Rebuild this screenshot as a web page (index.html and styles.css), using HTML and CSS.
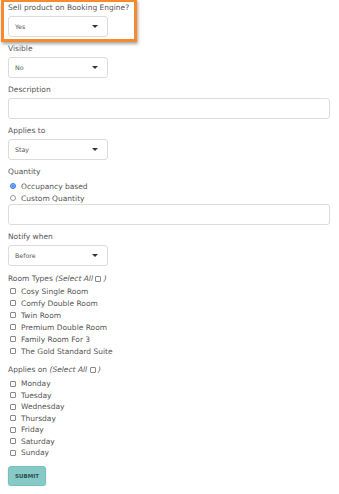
FILE: index.html
```html
<!DOCTYPE html>
<html>
<head>
<meta charset="utf-8">
<link rel="stylesheet" href="styles.css">
</head>
<body>
<form class="form">
  <div class="highlight"></div>
  <div class="field">
    <label class="lbl">Sell product on Booking Engine?</label>
    <div class="select"><span>Yes</span><i class="caret"></i></div>
  </div>
  <div class="field">
    <label class="lbl">Visible</label>
    <div class="select"><span>No</span><i class="caret"></i></div>
  </div>
  <div class="field">
    <label class="lbl">Description</label>
    <div class="input"></div>
  </div>
  <div class="field">
    <label class="lbl">Applies to</label>
    <div class="select"><span>Stay</span><i class="caret"></i></div>
  </div>
  <div class="field">
    <label class="lbl">Quantity</label>
    <div class="opt"><input type="radio" name="q" class="radio" checked><span>Occupancy based</span></div>
    <div class="opt"><input type="radio" name="q" class="radio"><span>Custom Quantity</span></div>
    <div class="input"></div>
  </div>
  <div class="field">
    <label class="lbl">Notify when</label>
    <div class="select"><span>Before</span><i class="caret"></i></div>
  </div>
  <div class="group rooms">
    <div class="lbl">Room Types <em class="all">(Select All <input type="checkbox" class="cb"> )</em></div>
    <div class="opt"><input type="checkbox" class="cb"><span>Cosy Single Room</span></div>
    <div class="opt"><input type="checkbox" class="cb"><span>Comfy Double Room</span></div>
    <div class="opt"><input type="checkbox" class="cb"><span>Twin Room</span></div>
    <div class="opt"><input type="checkbox" class="cb"><span>Premium Double Room</span></div>
    <div class="opt"><input type="checkbox" class="cb"><span>Family Room For 3</span></div>
    <div class="opt"><input type="checkbox" class="cb"><span>The Gold Standard Suite</span></div>
  </div>
  <div class="group days">
    <div class="lbl">Applies on <em class="all">(Select All <input type="checkbox" class="cb"> )</em></div>
    <div class="opt"><input type="checkbox" class="cb"><span>Monday</span></div>
    <div class="opt"><input type="checkbox" class="cb"><span>Tuesday</span></div>
    <div class="opt"><input type="checkbox" class="cb"><span>Wednesday</span></div>
    <div class="opt"><input type="checkbox" class="cb"><span>Thursday</span></div>
    <div class="opt"><input type="checkbox" class="cb"><span>Friday</span></div>
    <div class="opt"><input type="checkbox" class="cb"><span>Saturday</span></div>
    <div class="opt"><input type="checkbox" class="cb"><span>Sunday</span></div>
  </div>
  <button type="button" class="submit">SUBMIT</button>
</form>
</body>
</html>
```
FILE: styles.css
```css
* { box-sizing: border-box; }
html, body { margin: 0; padding: 0; background: #fff; }
body {
  font-family: "DejaVu Sans", "Noto Sans", sans-serif;
  color: #555;
  font-size: 7.5px;
}
.form {
  position: relative;
  padding: 2px 9px 0 8px;
  display: flex;
  flex-direction: column;
}
.highlight {
  position: absolute;
  left: 1px;
  top: -1px;
  width: 136px;
  height: 43px;
  border: 3px solid #f58a2e;
  box-shadow: 1px 2px 3px rgba(0,0,0,0.35);
  pointer-events: none;
}
.field { display: flex; flex-direction: column; margin-bottom: 6px; }
.lbl {
  display: block;
  line-height: 12px;
  height: 12px;
  margin-bottom: 2px;
  color: #555;
}
.select {
  width: 100px;
  height: 21px;
  border: 1px solid #dcdcdc;
  border-radius: 3px;
  display: flex;
  align-items: center;
  justify-content: space-between;
  padding: 0 9px 0 6px;
  font-size: 6.3px;
  color: #555;
  background: #fff;
}
.caret {
  width: 0; height: 0;
  border-left: 3px solid transparent;
  border-right: 3px solid transparent;
  border-top: 3px solid #333;
}
.input {
  width: 322px;
  height: 21px;
  border: 1px solid #dcdcdc;
  border-radius: 3px;
  background: #fff;
}
.opt {
  display: flex;
  align-items: center;
  height: 12px;
  padding-left: 2px;
  gap: 5px;
  color: #555;
}
.radio, .cb {
  appearance: none;
  -webkit-appearance: none;
  margin: 0;
  width: 6px;
  height: 6px;
  border: 1px solid #888;
  background: #fff;
  flex: none;
}
.radio { border-radius: 50%; border-color: #999; }
.radio:checked { border: 1px solid #3c82f0; background: #3c82f0; box-shadow: inset 0 0 0 1px #9cc0f8; }
.cb { border-radius: 1px; }
.all { font-style: italic; }
.all .cb { display: inline-block; vertical-align: -1px; }
.group { display: flex; flex-direction: column; }
.rooms { margin-bottom: 7px; padding-top: 1px; }
.rooms .lbl { margin-bottom: 0; }
.days .lbl { margin-bottom: 2px; }
.days .opt { height: 11.5px; }
.submit {
  align-self: flex-start;
  margin-top: 7px;
  width: 38px;
  height: 20px;
  border: 1px solid #7bbfbb;
  border-radius: 3px;
  background: #85cac6;
  color: #2f4f4f;
  font-family: "DejaVu Sans", sans-serif;
  font-weight: bold;
  font-size: 5.5px;
  padding: 0;
  box-shadow: 0 1px 2px rgba(0,0,0,0.15);
}
```
